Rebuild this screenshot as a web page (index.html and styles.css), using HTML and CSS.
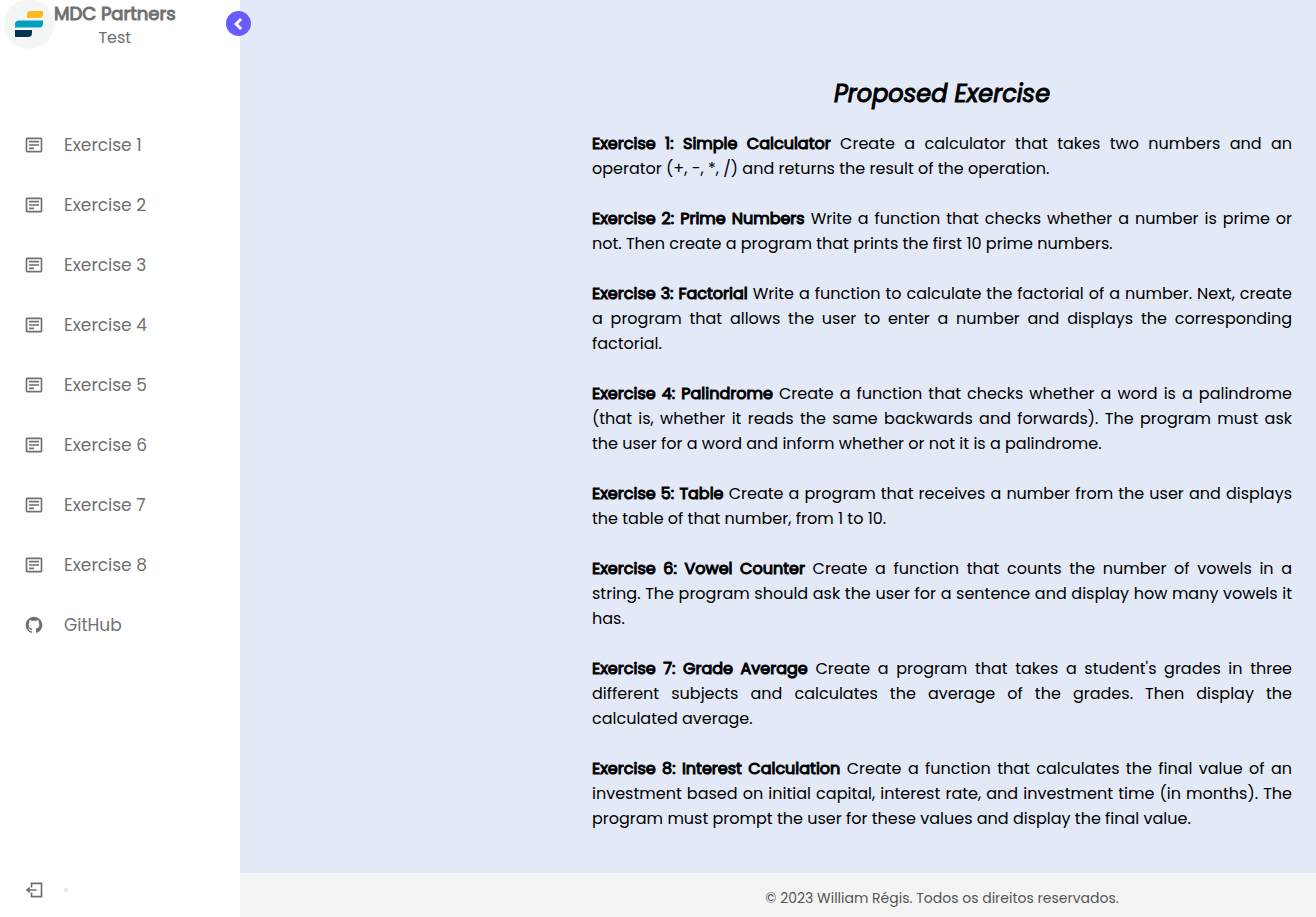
FILE: index.html
```
<!DOCTYPE html>
<html lang="en">
<head>
<meta charset="utf-8">
<title>Proposed Exercise</title>
<link rel="stylesheet" href="styles.css">
</head>
<body>
<svg class="defs" aria-hidden="true">
  <symbol id="detail" viewBox="0 0 24 24"><path d="M20 3H4c-1.103 0-2 .897-2 2v14c0 1.103.897 2 2 2h16c1.103 0 2-.897 2-2V5c0-1.103-.897-2-2-2zM4 19V5h16l.002 14H4z"/><path d="M6 7h12v2H6zm0 4h12v2H6zm0 4h6v2H6z"/></symbol>
</svg>
<nav class="sidebar">
  <header class="brand">
    <svg class="logo" viewBox="0 0 50 50" aria-hidden="true">
      <circle cx="25" cy="25" r="25" fill="#f4f6f6"/>
      <path d="M26 12h13v3q0 4-4 4H23v-3q0-4 3-4z" fill="#ffb81f"/>
      <path d="M15 21.500h24v3q0 4-4 4H11v-3q0-4 4-4z" fill="#049fbf"/>
      <path d="M11 31h17v3q0 4-4 4H11z" fill="#03344d"/>
    </svg>
    <div class="brand-text">
      <span class="name">MDC Partners</span>
      <span class="role">Test</span>
    </div>
    <button class="toggle" type="button" aria-label="Collapse sidebar">
      <svg viewBox="0 0 24 24" aria-hidden="true"><path d="M14.500 6 8.500 12l6 6" fill="none" stroke="#fff" stroke-width="3.500"/></svg>
    </button>
  </header>
  <ul class="menu">
    <li><a href="#ex1"><svg class="icon" aria-hidden="true"><use href="#detail"/></svg><span>Exercise 1</span></a></li>
    <li><a href="#ex2"><svg class="icon" aria-hidden="true"><use href="#detail"/></svg><span>Exercise 2</span></a></li>
    <li><a href="#ex3"><svg class="icon" aria-hidden="true"><use href="#detail"/></svg><span>Exercise 3</span></a></li>
    <li><a href="#ex4"><svg class="icon" aria-hidden="true"><use href="#detail"/></svg><span>Exercise 4</span></a></li>
    <li><a href="#ex5"><svg class="icon" aria-hidden="true"><use href="#detail"/></svg><span>Exercise 5</span></a></li>
    <li><a href="#ex6"><svg class="icon" aria-hidden="true"><use href="#detail"/></svg><span>Exercise 6</span></a></li>
    <li><a href="#ex7"><svg class="icon" aria-hidden="true"><use href="#detail"/></svg><span>Exercise 7</span></a></li>
    <li><a href="#ex8"><svg class="icon" aria-hidden="true"><use href="#detail"/></svg><span>Exercise 8</span></a></li>
    <li><a href="#github"><svg class="icon" viewBox="0 0 24 24" aria-hidden="true"><path d="M12.026 2c-5.509 0-9.974 4.465-9.974 9.974 0 4.406 2.857 8.145 6.821 9.465.499.09.679-.217.679-.481 0-.237-.008-.865-.011-1.696-2.775.602-3.361-1.338-3.361-1.338-.452-1.152-1.107-1.459-1.107-1.459-.905-.619.069-.605.069-.605 1.002.07 1.527 1.028 1.527 1.028.89 1.524 2.336 1.084 2.902.829.091-.645.351-1.085.635-1.334-2.214-.251-4.542-1.107-4.542-4.93 0-1.087.389-1.979 1.024-2.675-.101-.253-.446-1.268.099-2.64 0 0 .837-.269 2.742 1.021a9.582 9.582 0 0 1 2.496-.336 9.554 9.554 0 0 1 2.496.336c1.906-1.291 2.742-1.021 2.742-1.021.545 1.372.203 2.387.099 2.64.64.696 1.024 1.587 1.024 2.675 0 3.833-2.33 4.675-4.552 4.922.355.308.675.916.675 1.846 0 1.334-.012 2.41-.012 2.737 0 .267.178.577.687.479C19.146 20.115 22 16.379 22 11.974 22 6.465 17.535 2 12.026 2z"/></svg><span>GitHub</span></a></li>
  </ul>
  <a class="exit" href="#exit" aria-label="Exit"><svg class="icon" viewBox="0 0 24 24" aria-hidden="true"><path d="M9 9V4h12v16H9v-5" fill="none" stroke="currentColor" stroke-width="2"/><path d="m2 12 5-4v3h8v2H7v3z"/></svg><span class="dot"></span></a>
</nav>
<div class="page">
  <main class="content">
    <h1>Proposed Exercise</h1>
    <p id="ex1"><b>Exercise 1: Simple Calculator</b> Create a calculator that takes two numbers and an operator (+, -, *, /) and returns the result of the operation.</p>
    <p id="ex2"><b>Exercise 2: Prime Numbers</b> Write a function that checks whether a number is prime or not. Then create a program that prints the first 10 prime numbers.</p>
    <p id="ex3"><b>Exercise 3: Factorial</b> Write a function to calculate the factorial of a number. Next, create a program that allows the user to enter a number and displays the corresponding factorial.</p>
    <p id="ex4"><b>Exercise 4: Palindrome</b> Create a function that checks whether a word is a palindrome (that is, whether it reads the same backwards and forwards). The program must ask the user for a word and inform whether or not it is a palindrome.</p>
    <p id="ex5"><b>Exercise 5: Table</b> Create a program that receives a number from the user and displays the table of that number, from 1 to 10.</p>
    <p id="ex6"><b>Exercise 6: Vowel Counter</b> Create a function that counts the number of vowels in a string. The program should ask the user for a sentence and display how many vowels it has.</p>
    <p id="ex7"><b>Exercise 7: Grade Average</b> Create a program that takes a student's grades in three different subjects and calculates the average of the grades. Then display the calculated average.</p>
    <p id="ex8"><b>Exercise 8: Interest Calculation</b> Create a function that calculates the final value of an investment based on initial capital, interest rate, and investment time (in months). The program must prompt the user for these values and display the final value.</p>
  </main>
  <footer class="footer">© 2023 William Régis. Todos os direitos reservados.</footer>
</div>
</body>
</html>
```
FILE: styles.css
```
* { box-sizing: border-box; margin: 0; padding: 0; }
body {
  display: flex;
  min-height: 100vh;
  background: #e3e9f7;
  color: #000;
  font-family: Poppins, Inter, "Open Sans", sans-serif;
}
.defs { display: none; }
.sidebar {
  position: sticky;
  top: 0;
  flex: 0 0 240px;
  height: 100vh;
  display: flex;
  flex-direction: column;
  background: #fff;
  color: #707070;
}
.brand {
  position: relative;
  display: flex;
  height: 50px;
  padding-left: 4px;
}
.logo { width: 50px; height: 50px; margin-top: -1px; }
.brand-text { display: flex; flex-direction: column; align-items: center; padding-top: 2px; }
.brand-text span { line-height: 24px; }
.name, .content h1, .content b {
  font-weight: 400;
  -webkit-text-stroke: 1px currentColor;
}
.name { font-size: 18px; }
.role { font-size: 16px; }
.toggle {
  position: absolute;
  top: 11px;
  right: -11px;
  display: grid;
  place-items: center;
  width: 25px;
  height: 25px;
  border: 0;
  border-radius: 50%;
  background: #695cfe;
}
.toggle svg { width: 20px; height: 20px; }
.menu { flex: 1; list-style: none; padding-top: 65px; }
.menu a, .exit {
  display: flex;
  align-items: center;
  gap: 20px;
  height: 60px;
  padding-left: 24px;
  color: inherit;
  font-size: 17px;
  text-decoration: none;
}
.icon { width: 20px; height: 20px; fill: currentColor; }
.exit { height: 54px; }
.dot { width: 4px; height: 4px; background: #ececec; }
.page { flex: 1; display: flex; flex-direction: column; min-width: 0; }
.content {
  flex: 1;
  width: 100%;
  padding: 76px 24px 42px 352px;
  font-size: 16px;
  line-height: 25px;
}
.content h1 {
  margin-bottom: 19px;
  font-size: 24px;
  font-style: italic;
  line-height: 36px;
  text-align: center;
}
.content p { text-align: justify; }
.content p + p { margin-top: 25px; }
.footer {
  padding: 15px 24px 9px 352px;
  background: #f4f4f4;
  color: #555;
  font-size: 14px;
  line-height: 20px;
  text-align: center;
}
```
